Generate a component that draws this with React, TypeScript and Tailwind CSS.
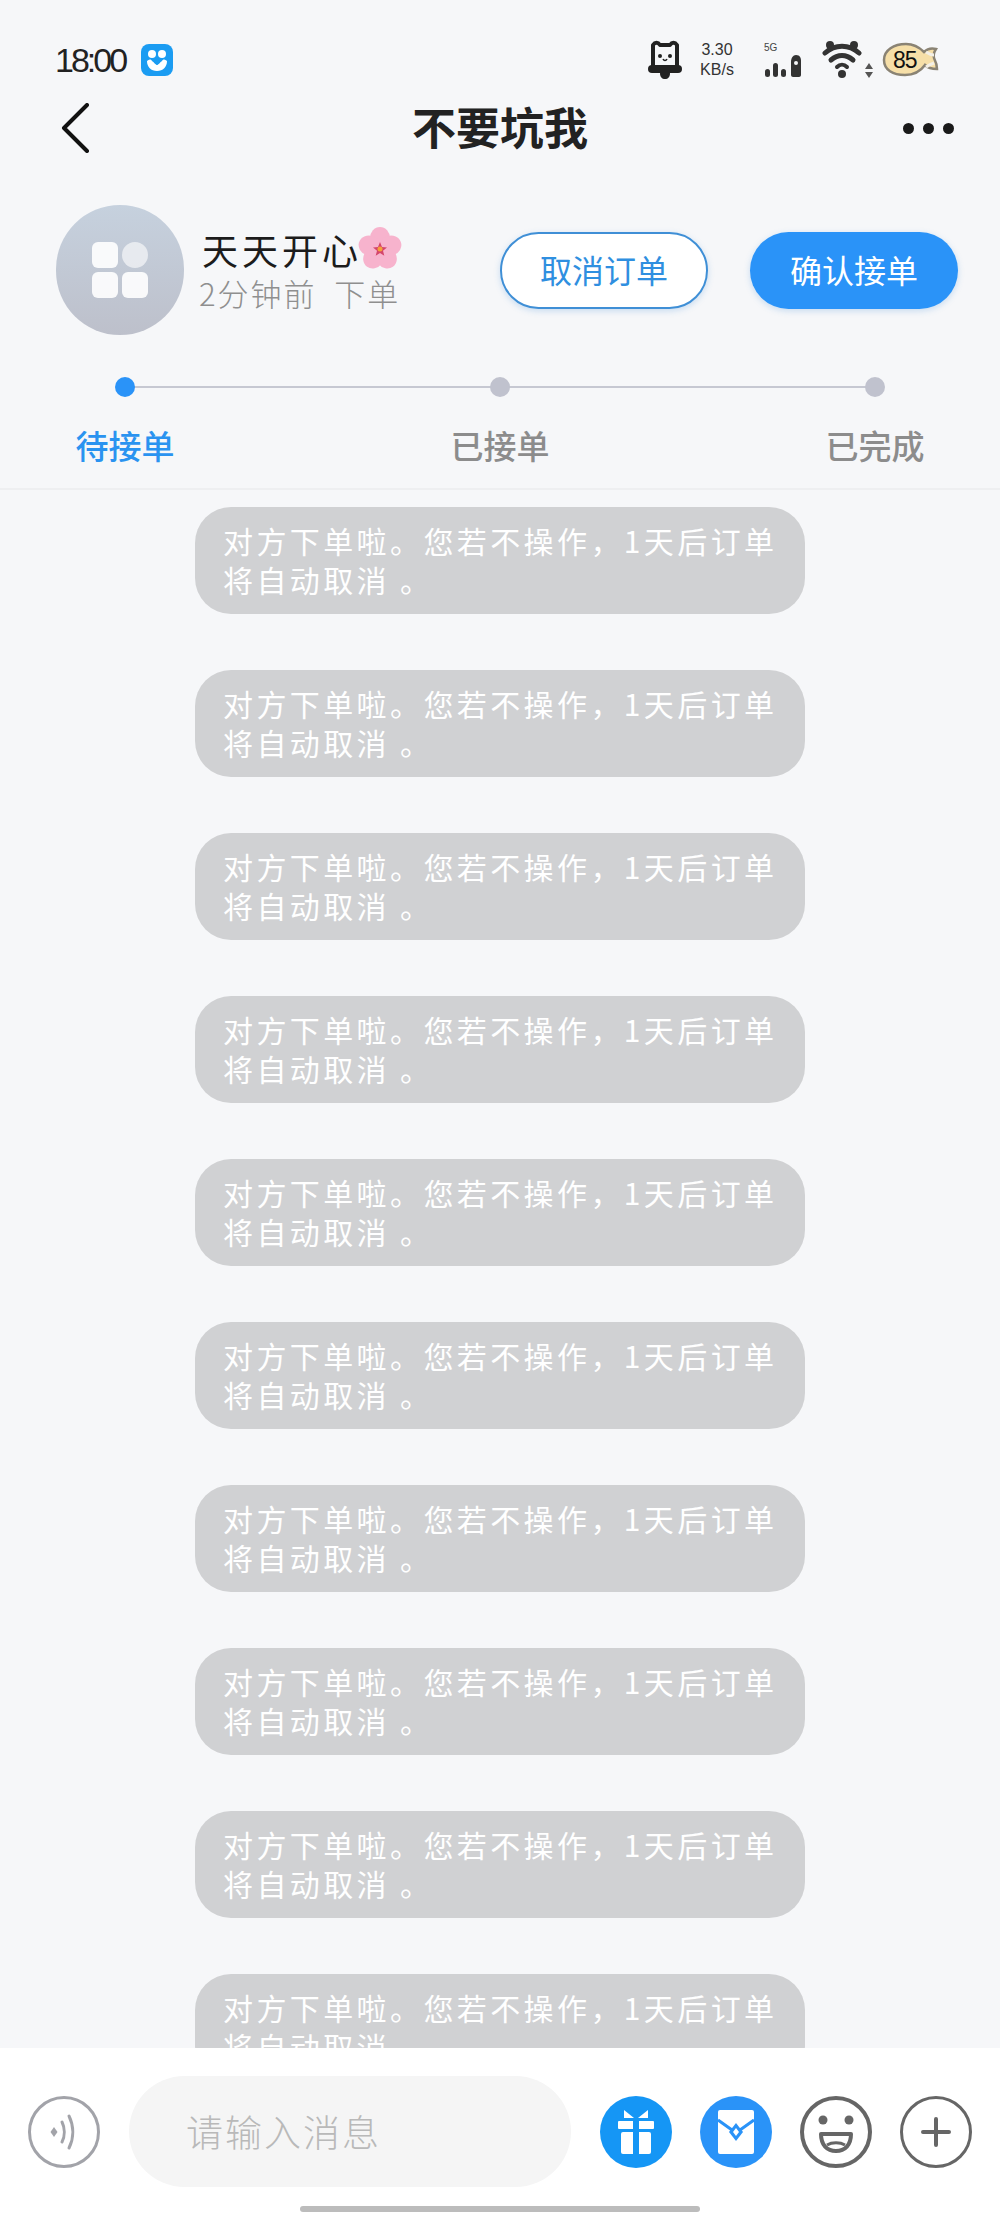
const cjk = "font-['Noto_Sans_CJK_SC',sans-serif]";

function BellCat() {
  return (
    <svg width="38" height="42" viewBox="0 0 38 42" fill="none">
      <path d="M7 6c2-3 5-3 7 0h10c2-3 5-3 7 0v22H7z" stroke="#222" strokeWidth="4" strokeLinejoin="round" fill="#f6f7f9" />
      <rect x="2" y="26" width="34" height="8" rx="4" fill="#222" />
      <path d="M14 34h10c0 4-2 6-5 6s-5-2-5-6z" fill="#222" />
      <circle cx="14" cy="17" r="2" fill="#222" />
      <circle cx="24" cy="17" r="2" fill="#222" />
      <path d="M17 20c1 2 3 2 4 0" stroke="#222" strokeWidth="1.5" />
    </svg>
  );
}

function Signal() {
  return (
    <svg width="38" height="24" viewBox="0 0 38 24" fill="#333">
      <rect x="1" y="15" width="5" height="8" rx="2.5" />
      <rect x="9" y="9" width="5" height="14" rx="2.5" />
      <rect x="17" y="15" width="5" height="8" rx="2.5" />
      <path d="M32 1c4 0 5 3 5 6v14c0 1-1 2-2 2h-6c-1 0-2-1-2-2V8c0-4 2-7 5-7z" />
      <circle cx="32" cy="9" r="2" fill="#f6f7f9" />
    </svg>
  );
}

function Wifi() {
  return (
    <svg width="56" height="40" viewBox="0 0 56 40" fill="none">
      <circle cx="8" cy="5" r="4" fill="#333" />
      <circle cx="32" cy="5" r="4" fill="#333" />
      <path d="M3 13c10-9 24-9 34 0" stroke="#333" strokeWidth="5" strokeLinecap="round" />
      <path d="M9 20c7-6 15-6 22 0" stroke="#333" strokeWidth="5" strokeLinecap="round" />
      <path d="M15 27c3-3 7-3 10 0" stroke="#333" strokeWidth="4" strokeLinecap="round" />
      <circle cx="20" cy="34" r="4" fill="#333" />
      <path d="M47 23l4 6h-8zM47 38l-4-6h8z" fill="#555" />
    </svg>
  );
}

function BatteryFish() {
  return (
    <svg width="58" height="36" viewBox="0 0 58 36" fill="none">
      <path d="M2 18C2 8 12 2 24 2c8 0 13 3 18 8 3-3 8-4 12-3-2 3-3 5-2 9 2 4 3 8 3 11-5 0-9-1-12-4-5 7-12 10-20 10C11 33 2 28 2 18z" fill="#f6dfa8" stroke="#8a8374" strokeWidth="2.5" />
      <path d="M44 10c3 2 5 3 8 3M44 25c3-2 5-3 8-4" stroke="#f3efe6" strokeWidth="3" />
      <text x="11" y="26" fontSize="23" fill="#111" fontFamily="'Liberation Sans', sans-serif" letterSpacing="-1">85</text>
    </svg>
  );
}

function Flower() {
  const petals = [0, 72, 144, 216, 288];
  return (
    <svg width="44" height="44" viewBox="0 0 44 44">
      {petals.map((angle) => (
        <ellipse key={angle} cx="22" cy="11" rx="10" ry="11" fill="#f7b3cd" transform={`rotate(${angle} 22 22)`} />
      ))}
      <path d="M22 15l2 5 5 .4-4 3.3 1.3 5-4.3-2.8-4.3 2.8 1.3-5-4-3.3 5-.4z" fill="#d4456b" />
      <circle cx="22" cy="22" r="2.5" fill="#f4a13a" />
    </svg>
  );
}

function AppBadge() {
  return (
    <svg width="32" height="32" viewBox="0 0 32 32">
      <rect width="32" height="32" rx="8" fill="#1b9cf2" />
      <circle cx="11" cy="10" r="4" fill="#fff" />
      <circle cx="21" cy="10" r="4" fill="#fff" />
      <path d="M6 17c0 6 4 10 10 10s10-4 10-10c-2-2-4-2-5 0l-5 4-5-4c-1-2-3-2-5 0z" fill="#fff" />
      <path d="M16 21c-2-1-3-2-3-3 0-2 2-2 3-1 1-1 3-1 3 1 0 1-1 2-3 3z" fill="#1b9cf2" />
    </svg>
  );
}

function StatusBar() {
  return (
    <div className="h-[92px] pt-[38px] pl-[55px] pr-[60px] flex items-start justify-between">
      <div className="flex items-center gap-[16px] h-[44px]">
        <span className="font-['Liberation_Sans',sans-serif] text-[34px] text-[#222] tracking-[-3px] leading-none">18:00</span>
        <AppBadge />
      </div>
      <div className="flex items-center h-[44px]">
        <BellCat />
        <div className="ml-[12px] w-[42px] text-[#333] font-['Liberation_Sans',sans-serif] text-[16px] leading-[20px] text-center">
          <div>3.30</div>
          <div>KB/s</div>
        </div>
        <div className="ml-[26px] w-[40px] flex flex-col">
          <span className="text-[10px] leading-[12px] text-[#444] font-['Liberation_Sans',sans-serif]">5G</span>
          <Signal />
        </div>
        <div className="ml-[18px]">
          <Wifi />
        </div>
        <div className="ml-[4px]">
          <BatteryFish />
        </div>
      </div>
    </div>
  );
}

function NavBar() {
  return (
    <div className="h-[72px] px-[60px] pr-[46px] flex items-center justify-between relative">
      <svg width="30" height="50" viewBox="0 0 30 50" fill="none">
        <path d="M27 2L4 25l23 23" stroke="#111" strokeWidth="4" strokeLinecap="round" strokeLinejoin="round" />
      </svg>
      <div className={`absolute inset-0 pb-[4px] flex items-center justify-center text-[44px] font-bold text-[#222] ${cjk}`}>不要坑我</div>
      <div className="flex gap-[9px]">
        <span className="w-[11px] h-[11px] rounded-full bg-[#1a1a1a]" />
        <span className="w-[11px] h-[11px] rounded-full bg-[#1a1a1a]" />
        <span className="w-[11px] h-[11px] rounded-full bg-[#1a1a1a]" />
      </div>
    </div>
  );
}

function Profile() {
  return (
    <div className="pt-[41px] pl-[56px] pr-[42px] flex items-center justify-between">
      <div className="flex items-center">
        <div className="w-[128px] h-[130px] rounded-full bg-gradient-to-b from-[#c6d1de] to-[#bdc0cb] flex items-center justify-center">
          <div className="w-[56px] grid grid-cols-2 gap-[4px]">
            <span className="h-[26px] rounded-[6px] bg-white/90" />
            <span className="h-[26px] rounded-full bg-white/60" />
            <span className="h-[26px] rounded-[6px] bg-white/90" />
            <span className="h-[26px] rounded-[6px] bg-white/90" />
          </div>
        </div>
        <div className={`ml-[15px] ${cjk}`}>
          <div className="flex items-center h-[46px] ml-[3px] text-[36px] font-normal text-[#1c1c1c] tracking-[4px] leading-none">
            天天开心
            <span className="-ml-[4px]">
              <Flower />
            </span>
          </div>
          <div className="text-[31px] font-light text-[#8f8f8f] leading-[42px] tracking-[2px] whitespace-pre">2分钟前  下单</div>
        </div>
      </div>
      <div className={`flex gap-[42px] ${cjk}`}>
        <button type="button" className="w-[208px] h-[77px] pb-[3px] rounded-full border-2 border-[#3f8fd6] bg-white text-[#2f8fe0] text-[32px] font-normal shadow-[0_2px_6px_rgba(60,140,220,0.25)]">取消订单</button>
        <button type="button" className="w-[208px] h-[77px] pb-[3px] rounded-full bg-[#2a93f8] text-white text-[32px] font-normal shadow-[0_2px_6px_rgba(60,140,220,0.25)]">确认接单</button>
      </div>
    </div>
  );
}

const steps = [
  { label: "待接单", active: true },
  { label: "已接单", active: false },
  { label: "已完成", active: false },
];

function Stepper() {
  return (
    <div className="relative pt-[42px] h-[155px] border-b-2 border-[#eeeff1]">
      <div className="absolute left-[125px] right-[125px] top-[51px] h-[2px] bg-[#c6c8d2]" />
      <div className="relative w-[750px] mx-auto flex justify-between">
        {steps.map((step) => (
          <div key={step.label} className="w-0 flex flex-col items-center">
            <span className={step.active ? "w-[20px] h-[20px] rounded-full bg-[#2a93f8] shrink-0" : "w-[20px] h-[20px] rounded-full bg-[#c0c2ce] shrink-0"} />
            <span className={`mt-[25px] whitespace-nowrap text-[33px] leading-[46px] font-medium ${cjk} ${step.active ? "text-[#2a93f0]" : "text-[#8c8c8c]"}`}>{step.label}</span>
          </div>
        ))}
      </div>
    </div>
  );
}

function Bubble() {
  return (
    <div className={`w-[610px] h-[107px] shrink-0 rounded-[36px] bg-[#d0d1d3] pl-[28px] pr-[24px] pt-[14px] text-white text-[30px] font-normal leading-[39px] tracking-[3.4px] ${cjk}`}>
      对方下单啦。您若不操作，1天后订单将自动取消 。
    </div>
  );
}

function GiftButton() {
  return (
    <svg width="72" height="72" viewBox="0 0 72 72">
      <circle cx="36" cy="36" r="36" fill="#1596f5" />
      <path d="M24 14l10 8h-10zM48 14l-10 8h10z" fill="#fff" />
      <rect x="18" y="25" width="36" height="8" fill="#fff" rx="1" />
      <rect x="21" y="36" width="30" height="22" fill="#fff" rx="2" />
      <rect x="33" y="22" width="6" height="38" fill="#1596f5" />
    </svg>
  );
}

function EnvelopeButton() {
  return (
    <svg width="72" height="72" viewBox="0 0 72 72">
      <circle cx="36" cy="36" r="36" fill="#2a93f8" />
      <rect x="18" y="14" width="36" height="44" rx="2" fill="#fff" />
      <path d="M18 24l14 10M54 24L40 34" stroke="#2a93f8" strokeWidth="3" />
      <path d="M36 27l7 9-7 9-7-9z" fill="#2a93f8" />
      <path d="M36 32l3 4-3 4-3-4z" fill="#fff" />
    </svg>
  );
}

function VoiceButton() {
  return (
    <svg width="72" height="72" viewBox="0 0 72 72" fill="none">
      <circle cx="36" cy="36" r="34.5" stroke="#a2a3a9" strokeWidth="3" />
      <path d="M26 31l3.500 5-3.500 5-3.500-5z" fill="#a2a3a9" />
      <path d="M34 26c3 6 3 14 0 20" stroke="#a2a3a9" strokeWidth="3" strokeLinecap="round" />
      <path d="M41 20c5 10 5 22 0 32" stroke="#a2a3a9" strokeWidth="3" strokeLinecap="round" />
    </svg>
  );
}

function SmileButton() {
  return (
    <svg width="72" height="72" viewBox="0 0 72 72" fill="none">
      <circle cx="36" cy="36" r="34" stroke="#666" strokeWidth="4" />
      <circle cx="23" cy="24" r="4.5" fill="#666" />
      <circle cx="49" cy="24" r="4.5" fill="#666" />
      <path d="M21 38h30c0 11-6 17-15 17s-15-6-15-17z" stroke="#666" strokeWidth="4" strokeLinejoin="round" />
      <path d="M27 49c5-3 13-3 18 0" stroke="#666" strokeWidth="3" />
    </svg>
  );
}

function PlusButton() {
  return (
    <svg width="72" height="72" viewBox="0 0 72 72" fill="none">
      <circle cx="36" cy="36" r="34.5" stroke="#666" strokeWidth="3" />
      <path d="M36 23v26M23 36h26" stroke="#666" strokeWidth="4" strokeLinecap="round" />
    </svg>
  );
}

function Footer() {
  return (
    <div className="h-[167px] shrink-0 bg-white relative pt-[28px] pl-[28px] flex items-start">
      <div className="mt-[20px]">
        <VoiceButton />
      </div>
      <div className={`ml-[29px] w-[442px] h-[111px] rounded-[56px] bg-[#f5f5f5] pl-[57px] flex items-center text-[37px] font-light tracking-[2px] text-[#b9b9b9] ${cjk}`}>请输入消息</div>
      <div className="ml-[29px] mt-[20px] flex gap-[28px]">
        <GiftButton />
        <EnvelopeButton />
        <SmileButton />
        <PlusButton />
      </div>
      <div className="absolute left-[300px] top-[158px] w-[400px] h-[6px] rounded-full bg-[#bcbcbc]" />
    </div>
  );
}

export default function App() {
  const bubbles = Array.from({ length: 10 }, (_, index) => index);
  return (
    <div className="w-[1000px] h-[2215px] bg-[#f6f7f9] flex flex-col overflow-hidden">
      <StatusBar />
      <NavBar />
      <Profile />
      <Stepper />
      <div className="flex-1 min-h-0 overflow-hidden pt-[17px] flex flex-col items-center gap-[56px]">
        {bubbles.map((index) => (
          <Bubble key={index} />
        ))}
      </div>
      <Footer />
    </div>
  );
}
